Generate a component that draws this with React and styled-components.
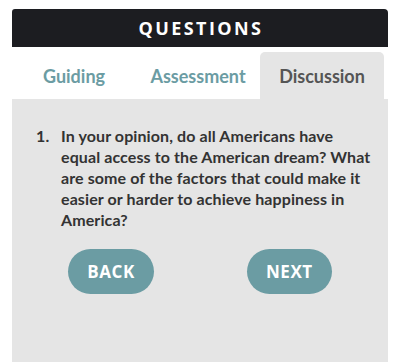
import React from "react";
import styled, { createGlobalStyle } from "styled-components";

const Global = createGlobalStyle`
  html, body { margin: 0; padding: 0; background: #ffffff; }
  body { font-family: "Lato", "Liberation Sans", sans-serif; }
`;

const Widget = styled.div`
  width: 376px;
  margin: 9px 0 0 12px;
  display: flex;
  flex-direction: column;
`;

const Header = styled.div`
  height: 38px;
  background: #1c1d21;
  border-radius: 3px 4px 0 0;
  color: #ffffff;
  display: flex;
  align-items: center;
  justify-content: center;
  font-family: "Open Sans", "DejaVu Sans", sans-serif;
  font-weight: 700;
  font-size: 18px;
  letter-spacing: 2.4px;
  padding-left: 2px;
`;

const Tabs = styled.div`
  height: 52px;
  display: grid;
  grid-template-columns: 124px 124px 124px;
  align-items: end;
`;

const Tab = styled.div`
  height: 47px;
  display: flex;
  align-items: center;
  justify-content: center;
  font-weight: 700;
  font-size: 18px;
  border-radius: 5px 5px 0 0;
  color: ${(p) => (p.$active ? "#555555" : "#6b9ca3")};
  background: ${(p) => (p.$active ? "#e5e5e5" : "transparent")};
`;

const Panel = styled.div`
  background: #e5e5e5;
  height: 263px;
  padding: 27px 20px 0 24px;
  box-sizing: border-box;
`;

const Question = styled.div`
  display: flex;
  font-weight: 700;
  font-size: 16px;
  line-height: 20.9px;
  color: #333333;
  letter-spacing: 0.1px;
`;

const Num = styled.span`
  width: 25px;
  flex: none;
`;

const QText = styled.span`
  white-space: nowrap;
`;

const Buttons = styled.div`
  display: flex;
  justify-content: center;
  gap: 93px;
  margin-top: 18px;
  padding-right: 4px;
`;

const Button = styled.button`
  height: 45px;
  padding: 0 19px;
  border: none;
  border-radius: 23px;
  background: #6b9ca3;
  color: #ffffff;
  font-family: "Open Sans", "DejaVu Sans", sans-serif;
  font-weight: 700;
  font-size: 17px;
  letter-spacing: 0.6px;
  cursor: pointer;
`;

export default function App() {
  return (
    <>
      <Global />
      <Widget>
        <Header>QUESTIONS</Header>
        <Tabs>
          <Tab>Guiding</Tab>
          <Tab>Assessment</Tab>
          <Tab $active>Discussion</Tab>
        </Tabs>
        <Panel>
          <Question>
            <Num>1.</Num>
            <QText>
              In your opinion, do all Americans have
              <br />
              equal access to the American dream? What
              <br />
              are some of the factors that could make it
              <br />
              easier or harder to achieve happiness in
              <br />
              America?
            </QText>
          </Question>
          <Buttons>
            <Button>BACK</Button>
            <Button>NEXT</Button>
          </Buttons>
        </Panel>
      </Widget>
    </>
  );
}
